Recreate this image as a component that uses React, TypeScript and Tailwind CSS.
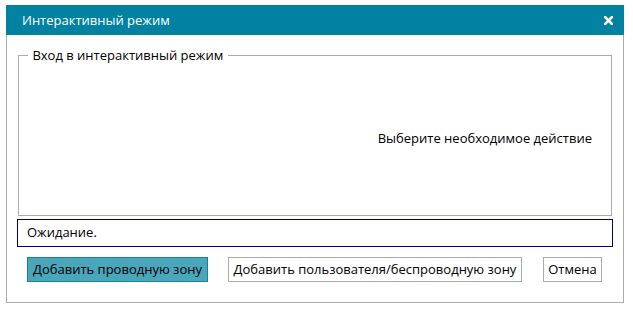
import React from "react";

export default function App() {
  return (
    <div className="w-[633px] h-[311px] bg-white" style={{ fontFamily: '"Open Sans", "Noto Sans", sans-serif' }}>
      <div className="ml-[6px] pt-[5px] w-[618px]">
        <div className="h-[30px] bg-[#0281a0] flex items-center justify-between pl-[16px] pr-[11px]">
          <span className="text-white text-[13px] leading-none">Интерактивный режим</span>
          <svg width="9" height="9" viewBox="0 0 9 9" className="block">
            <path d="M1 1 L8 8 M8 1 L1 8" stroke="white" strokeWidth="2.6" strokeLinecap="square" />
          </svg>
        </div>
        <div className="h-[268px] border-x border-b border-[#ababab] pl-[11px] pr-[11px] pt-[13px]">
          <fieldset className="border border-[#ababab] h-[168px] px-[9px] pb-0 flex flex-col">
            <legend className="px-[1px] text-[13px] leading-[14px] text-black">&nbsp;Вход в интерактивный режим&nbsp;</legend>
            <div className="flex-1 flex items-center justify-end pr-[10px]">
              <span className="text-[13px] text-black">Выберите необходимое действие</span>
            </div>
          </fieldset>
          <div className="mt-[3px] -ml-[1px] w-[596px] h-[28px] border border-[#000080] flex items-center pl-[9px] text-[13px] text-black">
            Ожидание.
          </div>
          <div className="mt-[10px] flex items-center pl-[9px]">
            <button className="h-[25px] w-[181px] bg-[#4aa6bb] border border-[#1d7f95] text-[13px] text-black flex items-center justify-center">
              Добавить проводную зону
            </button>
            <button className="ml-[20px] h-[25px] w-[294px] bg-white border border-[#ababab] text-[13px] text-black flex items-center justify-center">
              Добавить пользователя/беспроводную зону
            </button>
            <button className="ml-[21px] h-[25px] w-[59px] bg-white border border-[#ababab] text-[13px] text-black flex items-center justify-center">
              Отмена
            </button>
          </div>
        </div>
      </div>
    </div>
  );
}
